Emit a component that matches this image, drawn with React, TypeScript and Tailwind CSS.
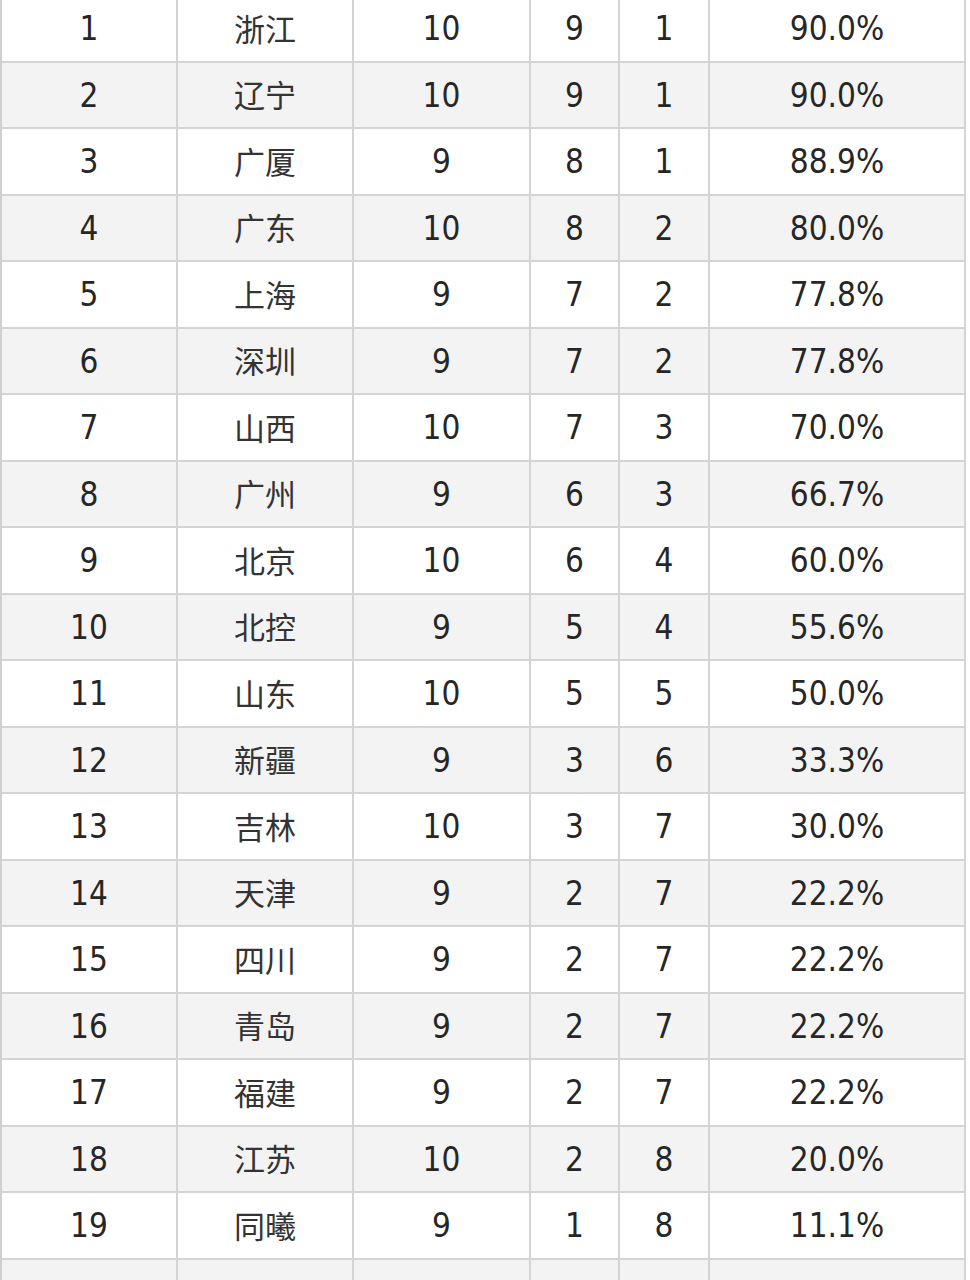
import React from "react";

const rows: [string, string, string, string, string, string][] = [
  ["1", "浙江", "10", "9", "1", "90.0%"],
  ["2", "辽宁", "10", "9", "1", "90.0%"],
  ["3", "广厦", "9", "8", "1", "88.9%"],
  ["4", "广东", "10", "8", "2", "80.0%"],
  ["5", "上海", "9", "7", "2", "77.8%"],
  ["6", "深圳", "9", "7", "2", "77.8%"],
  ["7", "山西", "10", "7", "3", "70.0%"],
  ["8", "广州", "9", "6", "3", "66.7%"],
  ["9", "北京", "10", "6", "4", "60.0%"],
  ["10", "北控", "9", "5", "4", "55.6%"],
  ["11", "山东", "10", "5", "5", "50.0%"],
  ["12", "新疆", "9", "3", "6", "33.3%"],
  ["13", "吉林", "10", "3", "7", "30.0%"],
  ["14", "天津", "9", "2", "7", "22.2%"],
  ["15", "四川", "9", "2", "7", "22.2%"],
  ["16", "青岛", "9", "2", "7", "22.2%"],
  ["17", "福建", "9", "2", "7", "22.2%"],
  ["18", "江苏", "10", "2", "8", "20.0%"],
  ["19", "同曦", "9", "1", "8", "11.1%"],
  ["", "", "", "", "", ""],
];

export default function App() {
  return (
    <div className="w-[970px] h-[1280px] overflow-hidden bg-white">
      <div
        className="-mt-[4px] w-[966px] border-l-2 border-[#d0d0d0] text-[33px] text-[#262626]"
        style={{ fontFamily: '"DejaVu Sans Condensed", "DejaVu Sans", "Noto Sans CJK SC", sans-serif' }}
      >
        {rows.map((r, i) => (
          <div
            key={i}
            className={`grid grid-cols-[176px_176px_177px_89px_90px_256px] h-[66.5px] border-b-2 border-[#d4d4d4] ${
              i % 2 === 1 ? "bg-[#f3f3f3]" : "bg-white"
            }`}
          >
            {r.map((c, j) => (
              <div
                key={j}
                className={`flex items-center justify-center border-r-2 border-[#d4d4d4] leading-none ${
                  j === 1 ? "text-[#333] pb-[2px]" : "pt-[1px]"
                }`}
                style={j === 1 ? { fontFamily: '"Noto Sans CJK SC", sans-serif', fontSize: "31px" } : undefined}
              >
                {c}
              </div>
            ))}
          </div>
        ))}
      </div>
    </div>
  );
}
